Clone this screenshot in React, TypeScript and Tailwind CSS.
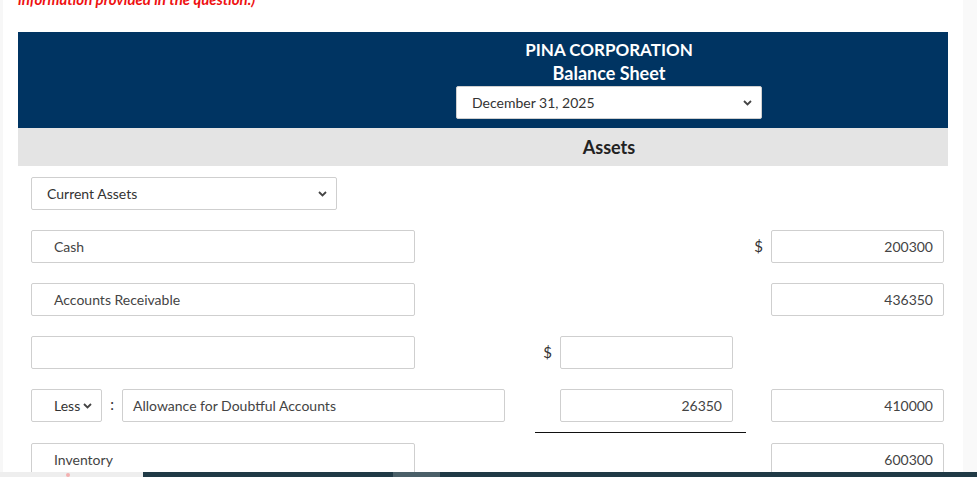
import React from "react";

const Chevron = () => (
  <svg width="9" height="6" viewBox="0 0 9 6" className="text-[#444]">
    <path d="M1 1l3.5 3.5L8 1" fill="none" stroke="currentColor" strokeWidth="1.8" />
  </svg>
);

function Select({ value, className, pad = "pl-[15px]" }: { value: string; className: string; pad?: string }) {
  return (
    <div
      className={`h-[33px] flex items-center justify-between border border-[#cfcfcf] rounded-[2px] bg-white pr-[9px] text-[14px] text-[#333] ${pad} ${className}`}
    >
      <span>{value}</span>
      <Chevron />
    </div>
  );
}

function Field({ value = "", right = false, className }: { value?: string; right?: boolean; className: string }) {
  return (
    <div
      className={`h-[33px] flex items-center border border-[#cfcfcf] rounded-[2px] bg-white text-[14px] text-[#444] ${
        right ? "justify-end pr-[10px]" : "pl-[22px]"
      } ${className}`}
    >
      {value}
    </div>
  );
}

function Dollar({ show }: { show?: boolean }) {
  return (
    <div className="w-[25px] h-[33px] flex items-center justify-center text-[15px] text-[#333]">
      {show ? "$" : ""}
    </div>
  );
}

function Row({
  left,
  midDollar,
  mid,
  rightDollar,
  right,
}: {
  left: React.ReactNode;
  midDollar?: boolean;
  mid?: React.ReactNode;
  rightDollar?: boolean;
  right?: React.ReactNode;
}) {
  return (
    <div className="flex items-center h-[33px]">
      <div className="w-[504px] flex items-center">{left}</div>
      <Dollar show={midDollar} />
      <div className="w-[173px]">{mid}</div>
      <div className="w-[13px]" />
      <Dollar show={rightDollar} />
      <div className="w-[173px]">{right}</div>
    </div>
  );
}

export default function App() {
  return (
    <div className="relative h-[477px] w-[977px] overflow-hidden flex font-['Lato','Open_Sans',sans-serif]">
      <div className="w-[3px] bg-[#f7f7f7]" />
      <div className="flex-1 bg-white pl-[15px] pr-[15px]">
        <p className="h-[43px] -mt-[11px] text-[15px] font-bold italic text-[#ee1111] leading-[20px]">
          information provided in the question.)
        </p>

        {/* Header */}
        <div className="bg-[#003462] pt-[8px] pb-[9px] pl-[438px]">
          <div className="w-[306px] flex flex-col items-center text-white">
            <div className="text-[17px] font-bold leading-[20px]">PINA CORPORATION</div>
            <div className="text-[18px] font-bold leading-[20px] mt-[3px]">Balance Sheet</div>
            <Select value="December 31, 2025" className="w-[306px] mt-[3px]" />
          </div>
        </div>

        <div className="h-[38px] bg-[#e4e4e4] pl-[438px]">
          <div className="w-[306px] h-full flex items-center justify-center text-[18px] font-bold text-[#222]">
            Assets
          </div>
        </div>

        <div className="pl-[13px] pt-[11px] flex flex-col">
          <Select value="Current Assets" className="w-[306px]" />
          <div className="h-[20px]" />
          <Row
            left={<Field value="Cash" className="w-[384px]" />}
            rightDollar
            right={<Field value="200300" right className="w-[173px]" />}
          />
          <div className="h-[20px]" />
          <Row
            left={<Field value="Accounts Receivable" className="w-[384px]" />}
            right={<Field value="436350" right className="w-[173px]" />}
          />
          <div className="h-[20px]" />
          <Row left={<Field className="w-[384px]" />} midDollar mid={<Field right className="w-[173px]" />} />
          <div className="h-[20px]" />
          <Row
            left={
              <>
                <Select value="Less" pad="pl-[22px]" className="w-[71px] pr-[5px]" />
                <div className="w-[20px] text-center text-[15px] text-[#333] -mt-[3px]">:</div>
                <div className="w-[383px] h-[33px] flex items-center border border-[#cfcfcf] rounded-[2px] pl-[10px] text-[14px] text-[#444]">
                  Allowance for Doubtful Accounts
                </div>
              </>
            }
            mid={<Field value="26350" right className="w-[173px]" />}
            right={<Field value="410000" right className="w-[173px]" />}
          />
          <div className="h-[21px] pt-[10px]">
            <div className="ml-[504px] w-[211px] h-px bg-[#111]" />
          </div>
          <Row
            left={<Field value="Inventory" className="w-[384px]" />}
            right={<Field value="600300" right className="w-[173px]" />}
          />
        </div>
      </div>
      <div className="w-[14px] bg-[#f9f9f9]" />

      {/* bottom strip */}
      <div className="absolute left-0 bottom-0 w-full h-[5px] flex">
        <div className="w-[143px] bg-[#eeeeee] relative">
          <div className="absolute left-[66px] top-[1px] w-[4px] h-[4px] rounded-full bg-[#f3b0b0]" />
        </div>
        <div className="w-[250px] bg-[#203a46]" />
        <div className="w-[47px] bg-[#4a5f68]" />
        <div className="flex-1 bg-[#203a46]" />
      </div>
    </div>
  );
}
